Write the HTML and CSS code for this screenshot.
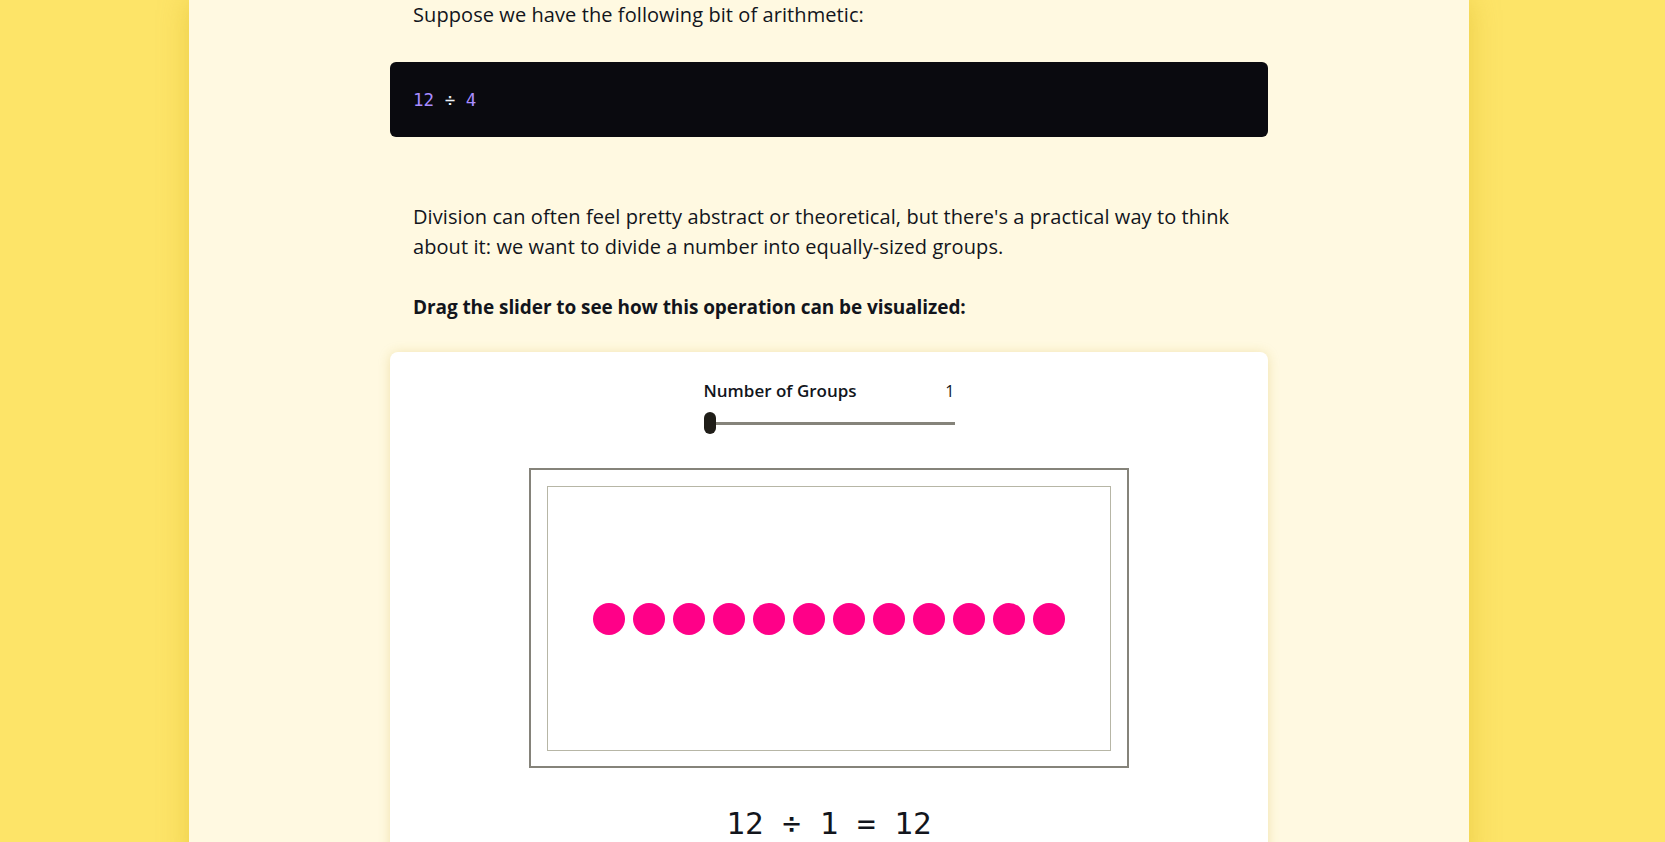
FILE: index.html
```html
<!DOCTYPE html>
<html lang="en">
<head>
<meta charset="utf-8">
<title>Division</title>
<link rel="stylesheet" href="styles.css">
</head>
<body>
<div class="page">
  <main class="column">
    <article class="article">
      <p class="para">Suppose we have the following bit of arithmetic:</p>
      <pre class="code"><code class="code-line"><span class="num">12</span> <span class="op">÷</span> <span class="num">4</span></code></pre>
      <p class="para para-after-code">Division can often feel pretty abstract or theoretical, but there's a practical way to think about it: we want to divide a number into equally-sized groups.</p>
      <p class="para para-strong"><strong>Drag the slider to see how this operation can be visualized:</strong></p>
      <section class="card">
        <div class="control">
          <div class="control-head">
            <span class="control-label">Number of Groups</span>
            <span class="control-value">1</span>
          </div>
          <div class="slider">
            <div class="slider-track"></div>
            <div class="slider-thumb"></div>
          </div>
        </div>
        <div class="frame">
          <div class="frame-inner">
            <div class="dots">
              <span class="dot"></span><span class="dot"></span><span class="dot"></span><span class="dot"></span>
              <span class="dot"></span><span class="dot"></span><span class="dot"></span><span class="dot"></span>
              <span class="dot"></span><span class="dot"></span><span class="dot"></span><span class="dot"></span>
            </div>
          </div>
        </div>
        <div class="equation">12 ÷ 1 = 12</div>
      </section>
    </article>
  </main>
</div>
</body>
</html>
```
FILE: styles.css
```css
html, body {
  margin: 0;
  padding: 0;
  height: 100%;
  overflow: hidden;
}
body {
  background: #fde468;
  color: hsl(222, 22%, 9%);
  font-family: "Open Sans", "Liberation Sans", sans-serif;
}
.page {
  display: flex;
  justify-content: center;
  padding-right: 7px;
  min-height: 100%;
}
.column {
  width: 1280px;
  background: #fff9e1;
  box-shadow: 0 0 28px rgba(200, 160, 0, 0.35);
  display: flex;
  justify-content: center;
}
.article {
  width: 878px;
}
.para {
  margin: 0;
  padding: 0 23px;
  font-size: 20px;
  line-height: 30px;
  letter-spacing: 0.08px;
}
.code {
  margin: 32px 0 0;
  height: 75px;
  box-sizing: border-box;
  background: #0a0a0f;
  border-radius: 6px;
  padding: 0 23px;
  display: flex;
  align-items: center;
  font-family: "DejaVu Sans Mono", "Liberation Mono", monospace;
  font-size: 17.5px;
  color: #e9e9f2;
}
.code-line {
  font-family: inherit;
  white-space: pre;
}
.num { color: #a88cff; }
.op { color: #e9eef5; }
.para-after-code {
  margin-top: 65px;
}
.para-strong {
  margin-top: 30px;
  font-size: 19px;
  letter-spacing: -0.08px;
}
.para-strong strong {
  font-weight: 700;
}
.card {
  margin-top: 30px;
  background: #fff;
  border-radius: 8px;
  box-shadow: 0 1px 12px rgba(200, 170, 40, 0.28);
  display: flex;
  flex-direction: column;
  align-items: center;
  padding-top: 27px;
  padding-bottom: 24px;
}
.control {
  width: 251px;
}
.control-head {
  display: flex;
  justify-content: space-between;
  align-items: center;
  font-size: 17px;
  line-height: 24px;
  font-weight: 600;
}
.control-value {
  font-weight: 400;
  font-size: 16px;
}
.slider {
  position: relative;
  height: 22px;
  margin-top: 9px;
  display: flex;
  align-items: center;
}
.slider-track {
  margin-left: 6px;
  flex: 1;
  height: 3px;
  background: #85837a;
}
.slider-thumb {
  position: absolute;
  left: 0;
  top: 0;
  width: 12px;
  height: 22px;
  border-radius: 6px;
  background: #1f1d18;
}
.frame {
  margin-top: 34px;
  width: 600px;
  height: 300px;
  box-sizing: border-box;
  border: 2px solid #85837a;
  padding: 16px 16px 15px 16px;
}
.frame-inner {
  height: 100%;
  box-sizing: border-box;
  border: 1px solid #b7b6a6;
  display: flex;
  align-items: center;
  justify-content: center;
}
.dots {
  display: flex;
  gap: 8px;
}
.dot {
  width: 32px;
  height: 32px;
  border-radius: 50%;
  background: #ff0088;
}
.equation {
  margin-top: 35px;
  font-family: "DejaVu Sans Mono", "Liberation Mono", monospace;
  font-size: 31px;
  line-height: 40px;
}
```
